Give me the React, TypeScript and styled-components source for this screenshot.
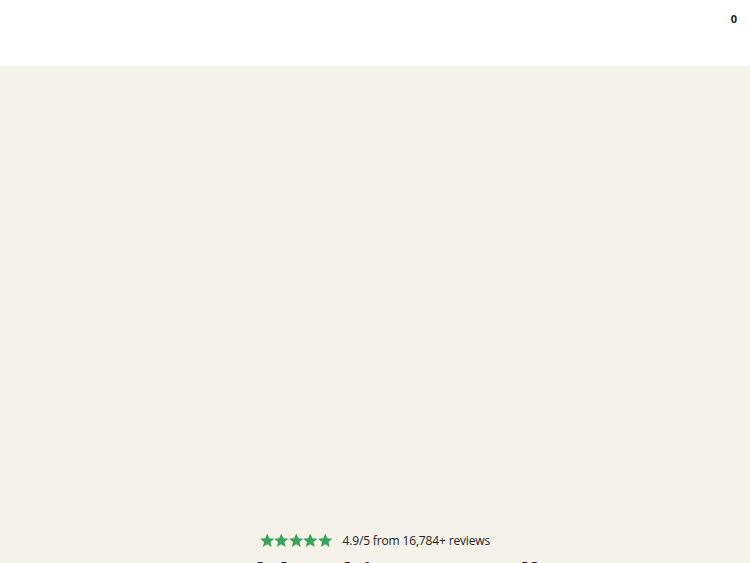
import React from 'react';
import styled, { createGlobalStyle } from 'styled-components';

const GlobalStyle = createGlobalStyle`
    html, body {
        margin: 0;
        padding: 0;
        background: #f5f2ea;
        font-family: 'Open Sans', 'Liberation Sans', sans-serif;
        overflow: hidden;
    }
`;

const Page = styled.div`
    width: 750px;
    height: 563px;
    overflow: hidden;
    display: flex;
    flex-direction: column;
`;

const Header = styled.header`
    height: 66px;
    background: #ffffff;
    display: flex;
    justify-content: flex-end;
    align-items: flex-start;
    padding: 11px 13px 0 0;
    box-sizing: border-box;
    flex-shrink: 0;
`;

const CartCount = styled.span`
    font-size: 11px;
    font-weight: 700;
    color: #1c1c1c;
`;

const Hero = styled.section`
    flex: 1;
    background: #f5f2ea;
    display: flex;
    flex-direction: column;
    align-items: center;
    padding-top: 466px;
`;

const Rating = styled.div`
    display: flex;
    align-items: center;
    gap: 10px;
`;

const Stars = styled.div`
    display: flex;
`;

const RatingText = styled.span`
    font-size: 12px;
    color: #222222;
    letter-spacing: -0.15px;
`;

const Heading = styled.h1`
    margin: 7px 0 0;
    font-family: 'Open Sans', 'Liberation Sans', sans-serif;
    font-size: 32px;
    line-height: 1.2;
    font-weight: 700;
    color: #1c1c1c;
    text-align: center;
    white-space: nowrap;
`;

const Star = () => (
    <svg width="14.5" height="15" viewBox="1 1 22 22">
        <path
            d="M12 1.5l3.1 7.1 7.7.6-5.9 5 1.8 7.5L12 17.7l-6.7 4 1.8-7.5-5.9-5 7.7-.6z"
            fill="#38a35a"
        />
    </svg>
);

const App: React.FC = () => (
    <Page>
        <GlobalStyle />
        <Header>
            <CartCount>0</CartCount>
        </Header>
        <Hero>
            <Rating>
                <Stars>
                    {[0, 1, 2, 3, 4].map((i) => (
                        <Star key={i} />
                    ))}
                </Stars>
                <RatingText>4.9/5 from 16,784+ reviews</RatingText>
            </Rating>
            <Heading>Healthy skin, naturally</Heading>
        </Hero>
    </Page>
);

export default App;
